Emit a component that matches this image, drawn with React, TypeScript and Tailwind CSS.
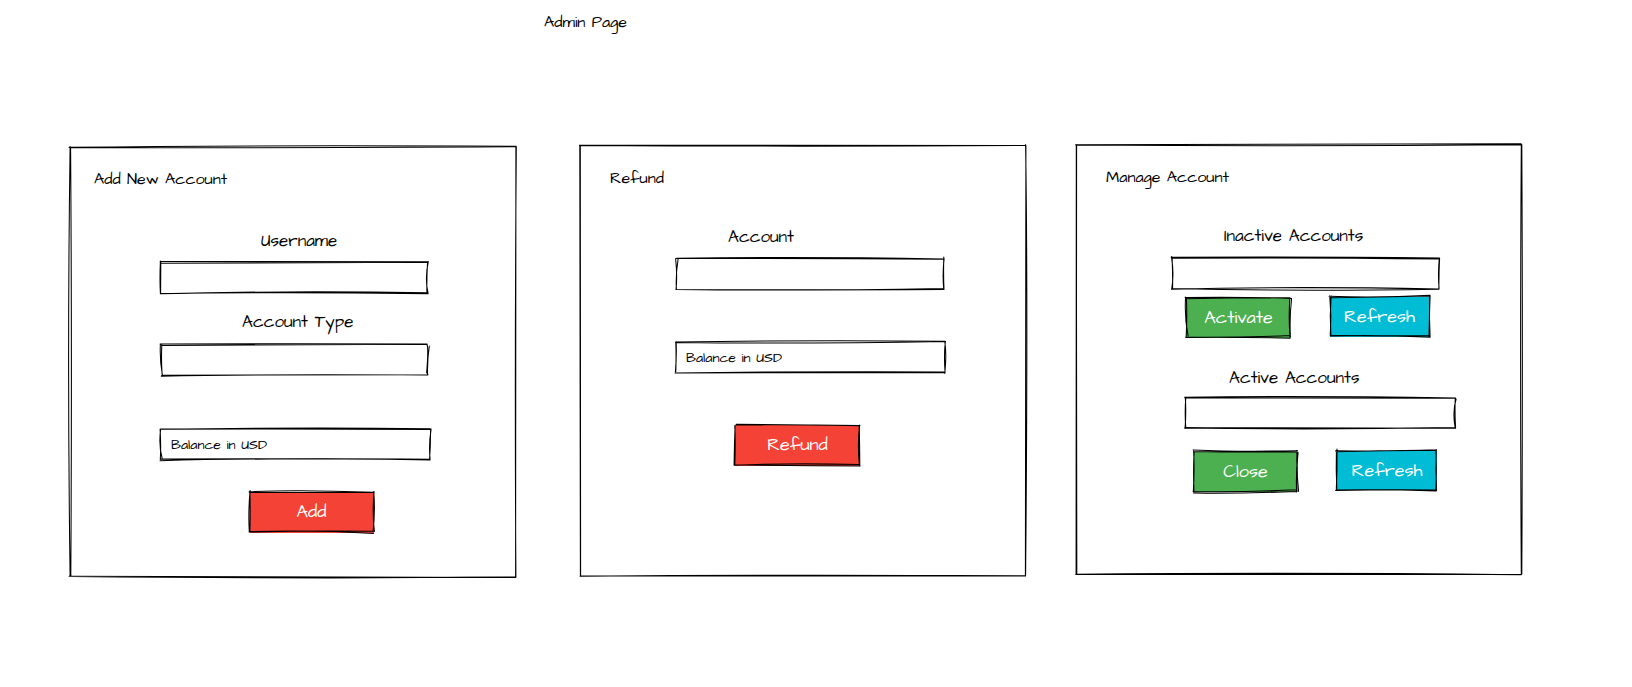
import type { ReactNode } from 'react';

type Bounds = [x: number, y: number, w: number, h: number];

/* Hand-drawn outline: loose pen strokes given in canvas coordinates. */
function Outline({ bounds, d }: { bounds: Bounds; d: string }) {
  return (
    <svg
      className="pointer-events-none absolute inset-0 size-full overflow-visible"
      viewBox={bounds.join(' ')}
      fill="none"
      stroke="#000"
      strokeWidth="1.05"
      strokeLinecap="round"
      aria-hidden="true"
    >
      <path d={d} transform="translate(-0.4 -0.5)" />
    </svg>
  );
}

type BoxProps = { className: string; bounds: Bounds; d: string; children?: ReactNode };

function Panel({ className, bounds, d, children }: BoxProps) {
  return (
    <section className={`relative flex w-[446px] shrink-0 flex-col items-start ${className}`}>
      <Outline bounds={bounds} d={d} />
      {children}
    </section>
  );
}

function Field({ className, bounds, d, children }: BoxProps) {
  return (
    <div className={`relative flex items-center pl-2.5 text-[14px] leading-5 ${className}`}>
      <Outline bounds={bounds} d={d} />
      {children && <span className="relative">{children}</span>}
    </div>
  );
}

function SketchButton({ className, bounds, d, children }: BoxProps) {
  return (
    <button className={`relative flex items-center justify-center text-[18px] leading-6 text-white ${className}`}>
      <Outline bounds={bounds} d={d} />
      <span className="relative">{children}</span>
    </button>
  );
}

function Heading({ className, children }: { className: string; children: ReactNode }) {
  return <h2 className={`text-[16px] leading-5 whitespace-nowrap ${className}`}>{children}</h2>;
}

function Label({ className, children }: { className: string; children: ReactNode }) {
  return <div className={`text-[17px] leading-5 whitespace-nowrap ${className}`}>{children}</div>;
}

export default function App() {
  return (
    <main className="flex h-[687px] w-[1632px] flex-col overflow-hidden bg-white font-['Architects_Daughter',cursive] text-black">
      <h1 className="mt-3 ml-[544px] text-[16px] leading-5 whitespace-nowrap">Admin Page</h1>

      <div className="mt-[113px] flex items-start pl-[70px]">
        <Panel
          className="mt-0.5 h-[430px]"
          bounds={[70, 147, 446, 430]}
          d="M69.5 147.8Q250 145.5 516.5 146.8M70 148Q250 148.8 516 147.3M70.5 147Q67.5 360 70.5 577M71 147.5Q72.5 360 71.2 577M516.7 147Q515 370 516.3 577.5M516.3 147Q515.5 400 516 577M69.5 576.8Q290 577 516 578M70.5 577Q320 579.5 516 577.5"
        >
          <Heading className="mt-[22px] ml-[24px]">Add New Account</Heading>
          <Label className="mt-[42px] ml-[191px]">Username</Label>
          <Field
            className="mt-[11px] ml-[91px] h-8 w-[267px]"
            bounds={[161, 262, 267, 32]}
            d="M160.5 262Q290 261.5 428.5 262.2M161 263.8Q280 263.8 428 262.6M160.8 261.5Q160 280 160.8 294M161.2 262.5L161 294M428.7 262Q425 279 428.5 294M428 262Q427 278 427.3 294M160.8 294.3Q290 291 428.3 293.3M161 294Q290 292.5 428.5 294.3"
          />
          <Label className="mt-[18px] ml-[172px]">Account Type</Label>
          <Field
            className="mt-[13px] ml-[91px] h-[31px] w-[267px]"
            bounds={[161, 345, 267, 31]}
            d="M160.5 344.5Q300 343.8 427.5 344.5M162 346Q290 345.5 427.5 344.8M160.8 344.5Q160 361 162.8 375.5M162.2 345Q161.5 360 162.5 374.5M429.7 346.5Q427.5 362 428 375M427.5 345Q429 350 427 373.5M161.7 376.7Q260 374.6 428 375.6M162 375.8Q300 375.2 428.5 375.2"
          />
          <Field
            className="mt-[53px] ml-[91px] h-[31px] w-[270px]"
            bounds={[161, 429, 270, 31]}
            d="M160.5 429.8Q300 427.6 431 429.2M161 429.6Q300 429 431.5 430M161 430Q159 446 162.5 458.5M160.5 429.5Q161.5 446 160.7 460M431.5 429.5Q429 445 430.5 460M431 430Q431 446 430 459.5M160.5 461.2Q260 458.4 430.5 459.8M161 459.6Q300 458.8 430.5 460.4"
          >
            Balance in USD
          </Field>
          <SketchButton
            className="mt-8 ml-[180px] h-[41px] w-[124px] bg-[#f44336] pr-px pb-0.5"
            bounds={[250, 492, 124, 41]}
            d="M249.5 492.2Q300 490 374 492.8M250 493L374.5 493M250.5 491Q248.5 512 249.7 532.5M250.3 491.5Q250.8 512 250.3 532M374.5 492Q372.5 512 374.8 532M374.2 492Q375.7 512 373.5 532M249.5 532.6Q310 530.8 374 531.8M250 532Q320 530.5 374 534"
          >
            Add
          </SketchButton>
        </Panel>

        <Panel
          className="ml-16 h-[431px]"
          bounds={[580, 145, 446, 431]}
          d="M579.8 145.7Q800 145.8 1026 146M580 146Q800 147.2 1026 146M580.2 145.5Q580 360 580.8 576M580.7 146Q581 360 581 576M1026 145Q1028.5 300 1026 576M1026.3 146Q1026.8 360 1025.8 576.5M580.5 576.7Q800 575 1026 576.5M580.5 576.5Q800 576.8 1026 576.3"
        >
          <Heading className="mt-[23px] ml-[30px]">Refund</Heading>
          <Label className="mt-[39px] ml-[148px]">Account</Label>
          <Field
            className="mt-3 ml-[96px] h-[31px] w-[268px]"
            bounds={[676, 259, 268, 31]}
            d="M677 258.8Q800 257 944 259.4M677 259Q810 258.5 944.5 259.7M676 259Q677.8 275 676.5 289.5M678.5 259.5Q676 275 676.8 289.5M944.2 257.5Q943.7 275 944.4 290M944.5 259Q942.7 275 944.2 290M676.3 289.9Q800 291.5 944 289M676.5 290Q800 290.7 944.3 290"
          />
          <Field
            className="mt-[52px] ml-[96px] h-[31px] w-[269px]"
            bounds={[676, 342, 269, 31]}
            d="M676 342.5Q800 340.5 945.5 341.7M676 343Q800 344.5 946 342M676.5 342Q677.2 356 675.8 372.5M676.2 343Q676.7 357 676.2 372M945.2 342Q947.2 355 945.2 374M945.7 342Q944.2 357 945.5 373M675.5 373.5Q800 371.8 945 372.4M676 373.5Q800 373 945.5 373"
          >
            Balance in USD
          </Field>
          <SketchButton
            className="mt-[52px] ml-[155px] h-[41px] w-[125px] bg-[#f44336] pb-px"
            bounds={[735, 425, 125, 41]}
            d="M736.5 424.8Q790 425 860.5 426.2M736.5 425.5Q790 425 860 426M735.5 426.5Q734.7 445 734.5 465.5M735.2 426Q736 445 735.2 465.5M860 425.5Q857.7 445 859.8 465.5M859.5 426Q860.2 445 860.2 465.5M734.5 465.7Q790 463.5 860 465M735 465.3Q800 466.5 860.5 466.5"
          >
            Refund
          </SketchButton>
        </Panel>

        <Panel
          className="ml-[50px] h-[430px]"
          bounds={[1076, 145, 446, 430]}
          d="M1076 145.2Q1300 145.5 1521.5 144.3M1076.5 145.5Q1300 147 1522 145.2M1076.7 145Q1076.2 360 1076.5 574.5M1077 145.5Q1076.7 360 1077.2 574.5M1521.7 144.5Q1520.3 360 1521.7 574.5M1522.2 145Q1523.3 360 1522.2 574.5M1076 574.8Q1290 572.8 1521.5 575.2M1076.5 575Q1300 575 1522 574.8"
        >
          <Heading className="mt-[22px] ml-[30px]">Manage Account</Heading>
          <Label className="mt-[39px] ml-[148px]">Inactive Accounts</Label>
          <Field
            className="mt-3 ml-[96px] h-[31px] w-[267px]"
            bounds={[1172, 258, 267, 31]}
            d="M1171.5 257.8Q1300 257 1440 258.5M1173 258.8Q1300 257.7 1439.5 259.5M1171.8 257Q1174.8 275 1172 290M1172.5 257.5Q1173.2 275 1173 289M1440 258.5Q1439.2 275 1439.3 289.5M1439.7 259Q1438.2 275 1439.5 289M1172 289.7Q1290 286.7 1439 289.4M1172.5 289Q1290 292 1439.3 289.7"
          />
          <div className="mt-2 ml-[110px] flex gap-10">
            <SketchButton
              className="mt-px h-10 w-[104px] bg-[#4caf50] pl-px"
              bounds={[1186, 298, 104, 40]}
              d="M1185.5 298Q1240 297 1291.5 299M1186 299.2Q1240 298.2 1290.5 298.3M1186 297.5Q1184.7 318 1188.5 336.5M1186.8 298.5Q1187.7 318 1186.5 338M1292 299Q1289.8 318 1290.8 337.5M1290.3 298.5Q1288.8 318 1290.5 338.5M1186 337.9Q1240 337.3 1290.5 338.8M1186.5 337.6Q1240 338.2 1290.5 336"
            >
              Activate
            </SketchButton>
            <SketchButton
              className="h-10 w-[100px] bg-[#00bcd4] pr-px"
              bounds={[1330, 297, 100, 40]}
              d="M1329.5 296.8Q1380 298.5 1430.5 295.7M1331 298.2Q1380 297.7 1430 296.5M1330.2 296.5Q1332 316 1330.7 336M1331.5 296.5Q1330 316 1331.3 336M1430.5 295.8Q1429.2 316 1430.5 337.5M1430 296.5Q1430.2 316 1429.4 337M1330.5 335.8Q1380 336.8 1430 336M1331 336.5Q1380 335.2 1430.5 337.7"
            >
              Refresh
            </SketchButton>
          </div>
          <Label className="mt-[30px] ml-[153px]">Active Accounts</Label>
          <Field
            className="mt-2.5 ml-[109px] h-[30px] w-[270px]"
            bounds={[1185, 398, 270, 30]}
            d="M1185 397.7Q1300 396.3 1456 398.4M1185.5 398.4Q1300 398.7 1455.5 398.8M1185.7 397.5Q1186.7 412 1185.5 429M1186.2 398Q1185 413 1186.2 428.5M1456.5 399.5Q1452.7 412 1455.5 428M1455.7 398.5Q1455 412 1456 428.5M1185 428.5Q1320 430.5 1455.5 428M1185.5 428.2Q1320 429 1456 428.8"
          />
          <div className="mt-[23px] ml-[118px] flex gap-[39px]">
            <SketchButton
              className="mt-px h-10 w-[104px] bg-[#4caf50] pr-px"
              bounds={[1194, 452, 104, 40]}
              d="M1193.5 450.5Q1240 452.5 1298 451.2M1194 451.9Q1240 452.9 1297.5 452.2M1194 450.5Q1195 470 1193.7 492.5M1194.5 452Q1193.5 472 1194.4 492M1297.4 451Q1296.7 472 1299 492M1298.5 453Q1296.2 472 1297 492.5M1193.5 492Q1240 493 1297 490.3M1194 493.5Q1240 494.2 1297 492"
            >
              Close
            </SketchButton>
            <SketchButton
              className="h-[39px] w-[100px] bg-[#00bcd4]"
              bounds={[1337, 451, 100, 39]}
              d="M1336 451.2Q1390 452 1437 450.3M1336.5 452.2Q1390 450.7 1436.5 451M1337.4 449.5Q1337.7 470 1336.7 490.5M1336.8 451Q1336.3 470 1337.2 490M1436.7 450Q1435.7 470 1437 491M1436.3 451Q1437.2 470 1436.3 491M1336.5 490.4Q1390 489.7 1436.5 491.5M1336 490.9Q1390 490 1436 490.5"
            >
              Refresh
            </SketchButton>
          </div>
        </Panel>
      </div>
    </main>
  );
}
